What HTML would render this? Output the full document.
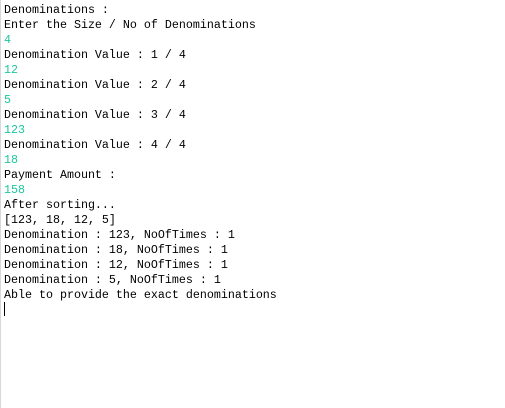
<!DOCTYPE html>
<html><head><style>
html,body{margin:0;padding:0;background:#fff;width:505px;height:408px;overflow:hidden}
.b{position:absolute;left:0;top:0;width:1px;height:408px;background:#d8d8d8}
pre{position:absolute;left:4px;top:3px;margin:0;font-family:"Liberation Mono",monospace;font-size:11.67px;line-height:15px;color:#000}
.g{color:#1cc59e}
.c{position:absolute;left:4px;top:302px;width:1px;height:14px;background:#000}
</style></head><body>
<div class="b"></div>
<pre>Denominations :
Enter the Size / No of Denominations
<span class="g">4</span>
Denomination Value : 1 / 4
<span class="g">12</span>
Denomination Value : 2 / 4
<span class="g">5</span>
Denomination Value : 3 / 4
<span class="g">123</span>
Denomination Value : 4 / 4
<span class="g">18</span>
Payment Amount :
<span class="g">158</span>
After sorting...
[123, 18, 12, 5]
Denomination : 123, NoOfTimes : 1
Denomination : 18, NoOfTimes : 1
Denomination : 12, NoOfTimes : 1
Denomination : 5, NoOfTimes : 1
Able to provide the exact denominations</pre>
<div class="c"></div>
</body></html>
